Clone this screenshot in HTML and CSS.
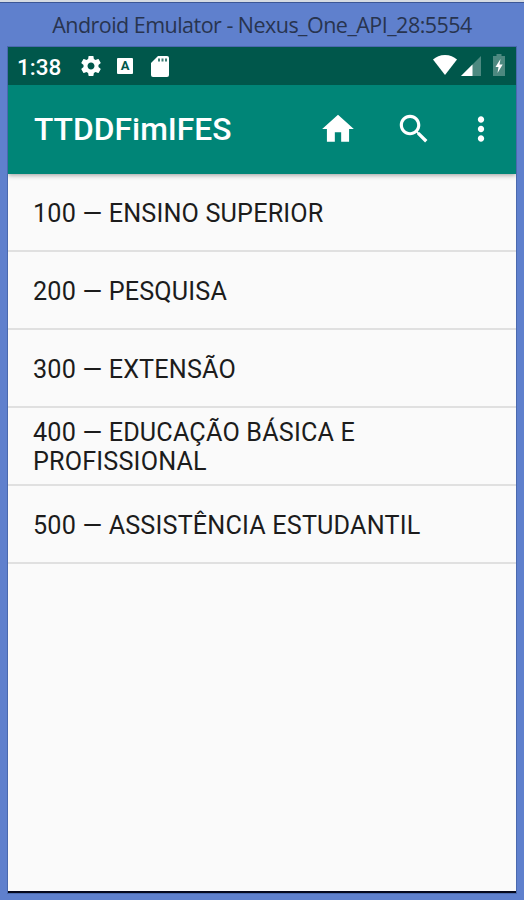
FILE: index.html
```
<!DOCTYPE html>
<html lang="pt-BR">
  <head>
    <meta charset="utf-8">
    <title>TTDDFimIFES</title>
    <link rel="stylesheet" href="styles.css">
  </head>
  <body>
    <div class="window">
      <div class="titlebar"><span class="caption">Android Emulator - Nexus_One_API_28:5554</span></div>

      <div class="screen">
        <div class="statusbar">
          <span class="clock">1:38</span>
          <svg class="gear" viewBox="2 2 20 20"><path d="M19.43 12.98c.04-.32.07-.64.07-.98s-.03-.66-.07-.98l2.11-1.65c.19-.15.24-.42.12-.64l-2-3.46c-.12-.22-.39-.3-.61-.22l-2.49 1c-.52-.4-1.08-.73-1.69-.98l-.38-2.65C14.46 2.18 14.25 2 14 2h-4c-.25 0-.46.18-.49.42l-.38 2.65c-.61.25-1.17.59-1.69.98l-2.49-1c-.23-.09-.49 0-.61.22l-2 3.46c-.13.22-.07.49.12.64l2.11 1.65c-.04.32-.07.65-.07.98s.03.66.07.98l-2.11 1.65c-.19.15-.24.42-.12.64l2 3.46c.12.22.39.3.61.22l2.49-1c.52.4 1.08.73 1.69.98l.38 2.65c.03.24.24.42.49.42h4c.25 0 .46-.18.49-.42l.38-2.65c.61-.25 1.17-.59 1.69-.98l2.49 1c.23.09.49 0 .61-.22l2-3.46c.12-.22.07-.49-.12-.64l-2.11-1.65zM12 15.5c-1.93 0-3.5-1.57-3.5-3.5s1.57-3.5 3.5-3.5 3.5 1.57 3.5 3.5-1.57 3.5-3.5 3.5z"/></svg>
          <span class="keyboard">A</span>
          <svg class="sdcard" viewBox="0 0 18 21"><path d="M7 0h9a2 2 0 0 1 2 2v17a2 2 0 0 1-2 2H2a2 2 0 0 1-2-2V7z"/><path class="slots" d="M7 2.500h2v3H7zM10.500 2.500h2v3h-2zM14 2.500h2v3h-2z"/></svg>
          <span class="spacer"></span>
          <svg class="wifi" viewBox="0 0 24 20"><path d="M12 20L0 4.600C3 1.800 7.200 0 12 0s9 1.800 12 4.600z"/></svg>
          <svg class="signal" viewBox="0 0 20 20"><path class="dim" d="M0 20L20 0v20z"/><path d="M0 20L11.500 8.500V20z"/></svg>
          <svg class="battery" viewBox="0 0 12 22"><path class="dim" d="M3.500 0h5v2H12v20H0V2h3.500z"/><path d="M7.500 5L2.500 13H5.500L4.500 19L9.700 10.500H6.500z"/></svg>
        </div>

        <div class="appbar">
          <h1>TTDDFimIFES</h1>
          <svg class="action" viewBox="0 0 24 24"><path d="M10 20v-6h4v6h5v-8h3L12 3 2 12h3v8z"/></svg>
          <svg class="action" viewBox="0 0 24 24"><path d="M15.500 14h-.79l-.28-.27C15.410 12.590 16 11.110 16 9.500 16 5.910 13.090 3 9.500 3S3 5.910 3 9.500 5.910 16 9.500 16c1.610 0 3.090-.59 4.230-1.570l.27.28v.79l5 4.990L20.490 19l-4.990-5zm-6 0C7.010 14 5 11.990 5 9.500S7.010 5 9.500 5 14 7.010 14 9.500 11.990 14 9.500 14z"/></svg>
          <svg class="action more" viewBox="0 0 24 24"><path d="M12 8c1.100 0 2-.9 2-2s-.9-2-2-2-2 .9-2 2 .9 2 2 2zm0 2c-1.100 0-2 .9-2 2s.9 2 2 2 2-.9 2-2-.9-2-2-2zm0 6c-1.100 0-2 .9-2 2s.9 2 2 2 2-.9 2-2-.9-2-2-2z"/></svg>
        </div>

        <ul class="list">
          <li><span>100 — ENSINO SUPERIOR</span></li>
          <li><span>200 — PESQUISA</span></li>
          <li><span>300 — EXTENSÃO</span></li>
          <li><span>400 — EDUCAÇÃO BÁSICA E<br>PROFISSIONAL</span></li>
          <li><span>500 — ASSISTÊNCIA ESTUDANTIL</span></li>
        </ul>
      </div>
    </div>
  </body>
</html>
```
FILE: styles.css
```
* {
    box-sizing: border-box;
}
body {
    margin: 0;
    font-family: Roboto, "Liberation Sans", sans-serif;
}
.window {
    display: flex;
    flex-direction: column;
    height: 900px;
    padding: 0 8px 7px;
    background: #5f80cd;
    border-top: 2px solid #d5dbe2;
}
.titlebar {
    height: 45px;
    margin: 0 -8px;
    padding-top: 7px;
    border-top: 1px solid #3c5796;
    text-align: center;
    font-family: "Open Sans", "Noto Sans", sans-serif;
    font-size: 21.5px;
    line-height: 29px;
    color: #28344f;
    white-space: nowrap;
}
.caption {
    letter-spacing: -0.53px;
}
.screen {
    flex: 1;
    background: #fafafa;
    border-bottom: 2px solid #05081c;
    box-shadow: 0 0 0 1px #4a69ae;
}
.statusbar {
    display: flex;
    align-items: center;
    height: 38px;
    padding: 0 11px 0 9px;
    background: #00574b;
    color: #fff;
}
svg {
    display: block;
    flex: none;
    fill: #fff;
}
.clock {
    width: 64px;
    font-size: 22.5px;
    font-weight: 500;
    line-height: 38px;
    padding-top: 1px;
}
.gear {
    width: 20px;
    height: 20px;
}
.keyboard {
    width: 16px;
    height: 16px;
    margin-left: 16px;
    border-radius: 1px;
    background: #fff;
    color: #00574b;
    font-size: 13px;
    font-weight: bold;
    line-height: 16px;
    text-align: center;
}
.sdcard {
    width: 18px;
    height: 21px;
    margin-left: 18px;
}
.slots {
    fill: #3d7d74;
}
.spacer {
    flex: 1;
}
.wifi {
    width: 24px;
    height: 20px;
    margin-top: -3px;
}
.signal {
    width: 20px;
    height: 20px;
    margin-left: 4px;
}
.battery {
    width: 12px;
    height: 22px;
    margin-left: 12px;
    margin-top: -2px;
}
.dim {
    fill: #4d8980;
}
.appbar {
    display: flex;
    align-items: center;
    height: 89px;
    padding: 0 0 2px 26px;
    background: #008577;
    box-shadow: 0 1px 5px rgba(0, 0, 0, 0.4);
    clip-path: inset(0 0 -8px 0);
}
h1 {
    width: 285px;
    margin: 0;
    font-size: 31.8px;
    font-weight: 500;
    line-height: 40px;
    color: #fff;
}
.action {
    width: 38px;
    height: 38px;
    margin-right: 38px;
}
.more {
    margin-left: -9px;
    margin-right: 0;
}
.list {
    margin: 0;
    padding: 0;
    list-style: none;
}
.list li {
    display: flex;
    align-items: center;
    height: 78px;
    padding: 2px 0 0 25px;
    border-bottom: 2px solid #e0e0e0;
    font-size: 25.2px;
    line-height: 29px;
    letter-spacing: 0.17px;
    color: #1c1c1c;
}
```
